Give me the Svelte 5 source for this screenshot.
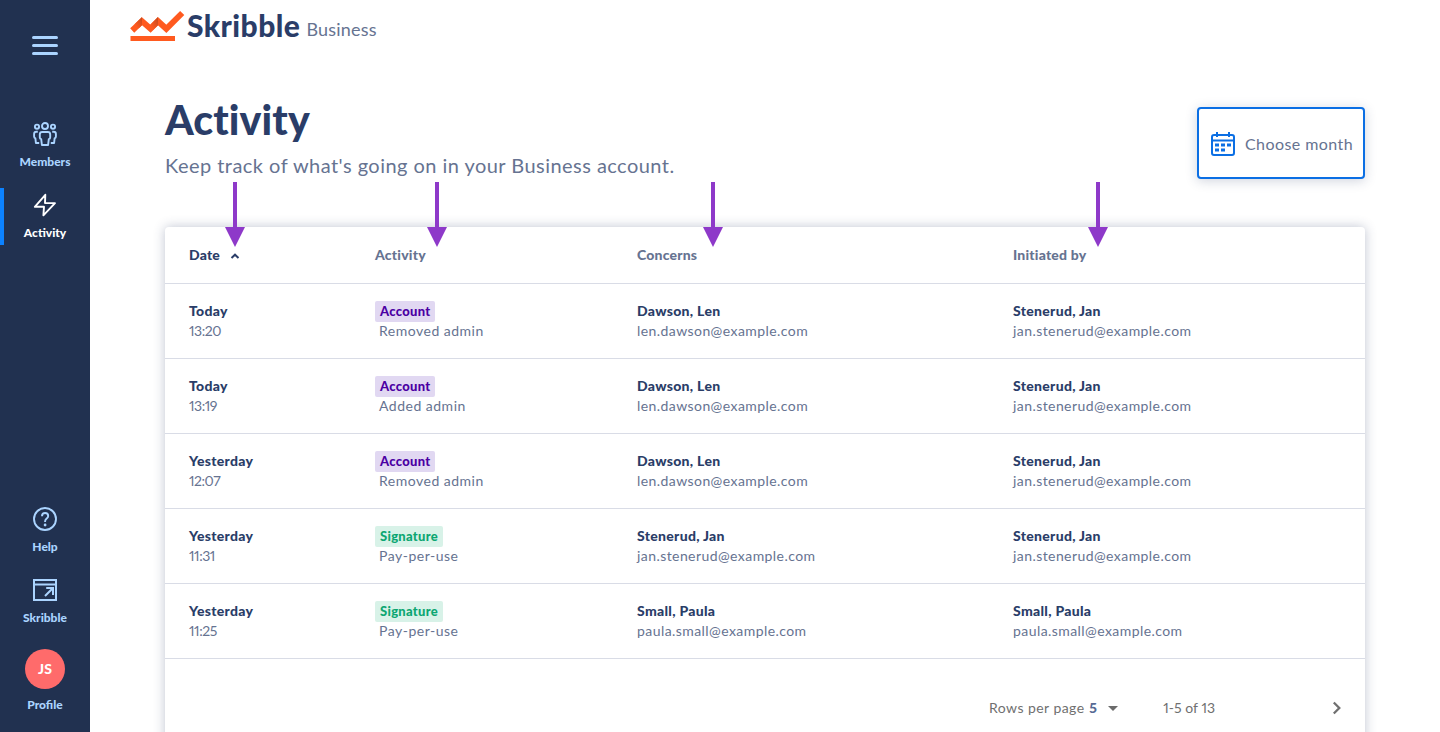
<script>
  const rows = [
    { day: 'Today', time: '13:20', type: 'Account', action: 'Removed admin', who: 'Dawson, Len', mail: 'len.dawson@example.com', by: 'Stenerud, Jan', byMail: 'jan.stenerud@example.com' },
    { day: 'Today', time: '13:19', type: 'Account', action: 'Added admin', who: 'Dawson, Len', mail: 'len.dawson@example.com', by: 'Stenerud, Jan', byMail: 'jan.stenerud@example.com' },
    { day: 'Yesterday', time: '12:07', type: 'Account', action: 'Removed admin', who: 'Dawson, Len', mail: 'len.dawson@example.com', by: 'Stenerud, Jan', byMail: 'jan.stenerud@example.com' },
    { day: 'Yesterday', time: '11:31', type: 'Signature', action: 'Pay-per-use', who: 'Stenerud, Jan', mail: 'jan.stenerud@example.com', by: 'Stenerud, Jan', byMail: 'jan.stenerud@example.com' },
    { day: 'Yesterday', time: '11:25', type: 'Signature', action: 'Pay-per-use', who: 'Small, Paula', mail: 'paula.small@example.com', by: 'Small, Paula', byMail: 'paula.small@example.com' }
  ];
  const pointers = [235, 437, 713, 1098];
</script>

<div class="app">
  <nav class="sidebar">
    <button class="menu" aria-label="Menu"><i></i><i></i><i></i></button>

    <a class="item members" href="#members">
      <svg width="26" height="26" viewBox="0 0 26 26" fill="none" stroke="currentColor" stroke-width="1.9" stroke-linejoin="round">
        <circle cx="13" cy="5" r="3" />
        <circle cx="5" cy="5.700" r="2.100" />
        <circle cx="21" cy="5.700" r="2.100" />
        <path d="M10.200 11h5.600c1.500 0 2.400.9 2.400 2.400v3c0 1-.5 1.500-1.400 1.700l-.7 5.900H9.900l-.7-5.900c-.9-.2-1.400-.7-1.400-1.700v-3c0-1.500.9-2.400 2.400-2.400z" />
        <path d="M5.800 10.700H4.400C2.900 10.700 2.100 11.500 2.100 13v2.600c0 1 .5 1.500 1.300 1.800l.5 4.600h3.300" />
        <path d="M20.200 10.700h1.400c1.500 0 2.300.8 2.300 2.300v2.600c0 1-.5 1.500-1.300 1.800l-.5 4.600h-3.300" />
      </svg>
      <span>Members</span>
    </a>
    <a class="item active" href="#activity">
      <svg width="26" height="26" viewBox="0 0 26 26" fill="none" stroke="currentColor" stroke-width="1.9" stroke-linejoin="round">
        <path d="M13.300 2.800L2.800 14.800h9.200L11.400 23.400 23 11.100h-10z" />
      </svg>
      <span>Activity</span>
    </a>

    <a class="item help" href="#help">
      <svg width="26" height="26" viewBox="0 0 26 26" fill="none" stroke="currentColor" stroke-width="1.900">
        <circle cx="13" cy="13" r="11" />
        <path d="M10 10.200c0-2 1.200-3.200 3.100-3.200s3.100 1.200 3.100 2.900c0 2.700-3.100 2.600-3.100 5.300v.9" />
        <circle cx="13.100" cy="19" r="1.400" fill="currentColor" stroke="none" />
      </svg>
      <span>Help</span>
    </a>
    <a class="item skribble" href="#skribble">
      <svg width="26" height="26" viewBox="0 0 26 26" fill="none" stroke="currentColor" stroke-width="2">
        <path d="M2 3h22v20H2zM2 7.500h22" />
        <path d="M13 19l7.500-7.500M14.200 11h6.800v7" />
      </svg>
      <span>Skribble</span>
    </a>
    <a class="item profile" href="#profile">
      <b class="avatar">JS</b>
      <span>Profile</span>
    </a>
  </nav>

  <main>
    <header class="brand">
      <svg width="55" height="32" viewBox="0 0 55 32">
        <defs>
          <linearGradient id="fold" x1="0" y1="1" x2="1" y2="0">
            <stop offset=".2" stop-color="#ff5a1f" />
            <stop offset="1" stop-color="#c4481c" />
          </linearGradient>
        </defs>
        <path d="M2.200 20.500L12 11.200l8.500 7.500L28 11.200l8.300 7.600L52.200 3" fill="none" stroke="#ff5a1f" stroke-width="5.900" />
        <path d="M4.500 14.200L12 7.100v8.200l-3.400 3.200z" fill="url(#fold)" />
        <path d="M20.500 14.600L28 7.100v8.200l-5.500 5.300z" fill="url(#fold)" />
        <path d="M.5 26h44.500v5H.5z" fill="#ff5a1f" />
      </svg>
      <strong>Skribble</strong>
      <span>Business</span>
    </header>

    <section class="page">
      <div class="heading">
        <div>
          <h1>Activity</h1>
          <p>Keep track of what's going on in your Business account.</p>
        </div>
        <button class="month">
          <svg width="26" height="26" viewBox="0 0 26 26" fill="none" stroke="#0b6fe4" stroke-width="2">
            <rect x="2" y="4" width="22" height="20" rx="2" />
            <path d="M2 9.500h22" />
            <path d="M7 1v5M19 1v5" />
            <path d="M5 14h4M11 14h4M17 14h4M5 19h4M11 19h4" stroke-width="3" />
          </svg>
          <span>Choose month</span>
        </button>
      </div>

      <div class="card">
        <div class="row head">
          <div class="sorted">Date
            <svg width="10" height="6" viewBox="0 0 10 6" fill="none" stroke="currentColor" stroke-width="2"><path d="M1.500 5L5 1.700 8.500 5" /></svg>
          </div>
          <div>Activity</div>
          <div>Concerns</div>
          <div>Initiated by</div>
        </div>
        {#each rows as r}
          <div class="row">
            <div><strong>{r.day}</strong><span class="time">{r.time}</span></div>
            <div class="kind">
              <em class:green={r.type === 'Signature'}>{r.type}</em>
              <span>{r.action}</span>
            </div>
            <div><strong>{r.who}</strong><span>{r.mail}</span></div>
            <div><strong>{r.by}</strong><span>{r.byMail}</span></div>
          </div>
        {/each}
        <footer>
          <span class="per">Rows per page</span>
          <b>5</b>
          <svg class="caret" width="10" height="5" viewBox="0 0 10 5"><path d="M0 0h10L5 5z" fill="#6b6b6b" /></svg>
          <span class="range">1-5 of 13</span>
          <svg class="next" width="10" height="14" viewBox="0 0 10 14" fill="none" stroke="#707070" stroke-width="2.300"><path d="M1.800 1.500L7.300 7l-5.500 5.500" /></svg>
        </footer>
      </div>
    </section>
  </main>

  {#each pointers as x}
    <svg class="pointer" style="left: {x - 10}px" width="20" height="65" viewBox="0 0 20 65">
      <path d="M8 0h4v45h8L10 65 0 45h8z" fill="#8e39c9" />
    </svg>
  {/each}
</div>

<style>
  :global(body) { background: #fff; overflow: hidden; }
  .app {
    position: relative;
    display: flex;
    height: 732px;
    overflow: hidden;
    font-family: Lato, "Open Sans", sans-serif;
    color: #667391;
    font-size: 14px;
  }
  button { font: inherit; color: inherit; cursor: pointer; }
  .sidebar {
    box-sizing: border-box;
    width: 90px;
    flex: none;
    background: #213150;
    display: flex;
    flex-direction: column;
    align-items: center;
    padding-top: 36px;
  }
  .menu {
    display: flex;
    flex-direction: column;
    gap: 5px;
    padding: 0;
    border: 0;
    background: none;
  }
  .menu i { width: 26px; height: 3px; border-radius: 2px; background: #abd4ff; }
  .item {
    box-sizing: border-box;
    width: 90px;
    height: 57px;
    padding-top: 4px;
    display: flex;
    flex-direction: column;
    align-items: center;
    color: #abd4ff;
    text-decoration: none;
    font-size: 12px;
    font-weight: 900;
    line-height: 16px;
  }
  .item svg { flex: none; }
  .item span { margin-top: 7px; }
  .members { margin-top: 62px; }
  .active { margin-top: 14px; color: #fff; background: linear-gradient(#0c82ff, #0c82ff) left / 4px 100% no-repeat; }
  .help { margin-top: auto; }
  .skribble { margin-top: 14px; }
  .profile { height: 83px; padding: 0; margin-top: 19px; }
  .profile span { margin-top: 8px; }
  .avatar {
    width: 40px;
    height: 40px;
    border-radius: 50%;
    background: #ff6b6b;
    color: #fff;
    font-size: 14px;
    line-height: 40px;
    text-align: center;
  }
  main { flex: 1; }
  .brand { display: flex; align-items: baseline; height: 60px; padding: 10px 0 0 40px; box-sizing: border-box; }
  .brand svg { align-self: flex-start; }
  .brand strong { margin-left: 2px; font-size: 30px; line-height: 31px; font-weight: 900; color: #2a3d68; letter-spacing: .45px; }
  .brand span { margin-left: 6px; font-size: 18px; letter-spacing: .2px; position: relative; top: -1px; }
  .page { padding: 39px 75px 0; }
  .heading { display: flex; justify-content: space-between; height: 128px; }
  h1 { margin: 0; font-size: 41px; line-height: 42px; font-weight: 900; color: #2a3d68; letter-spacing: .1px; }
  .heading p { margin: 12px 0 0; font-size: 20px; line-height: 24px; letter-spacing: .46px; }
  .month {
    box-sizing: border-box;
    width: 168px;
    height: 72px;
    margin-top: 8px;
    padding: 2px 0 0 11px;
    display: flex;
    align-items: center;
    gap: 9px;
    border: 2px solid #0b6fe4;
    border-radius: 4px;
    background: #fff;
    box-shadow: 0 2px 12px rgba(42, 61, 104, .22);
    font-size: 16px;
    white-space: nowrap;
    letter-spacing: .43px;
  }
  .month svg { flex: none; }
  .month span { margin-top: -2px; }
  .card {
    height: 560px;
    border-radius: 4px;
    background: #fff;
    box-shadow: 0 0 12px rgba(42, 61, 104, .3);
  }
  .row {
    box-sizing: border-box;
    display: grid;
    grid-template-columns: 186px 262px 376px 1fr;
    height: 75px;
    padding: 17px 24px;
    border-bottom: 1px solid #d9dce6;
    line-height: 20px;
    letter-spacing: .43px;
  }
  .head { height: 57px; padding-top: 18px; font-weight: 900; letter-spacing: .2px; }
  .sorted, .row strong { color: #2a3d68; }
  .sorted svg { margin: 0 0 1px 6px; }
  .row strong { display: block; font-weight: 900; letter-spacing: .3px; }
  .row span { display: block; }
  .row .time { font-variant-numeric: proportional-nums; letter-spacing: -.45px; }
  .kind em {
    display: block;
    width: max-content;
    height: 21px;
    margin-bottom: -1px;
    padding: 0 5px;
    box-sizing: border-box;
    border-radius: 2px;
    background: #e1d8f2;
    color: #4b00a3;
    font-style: normal;
    font-weight: 900;
    font-size: 13px;
    line-height: 21px;
    letter-spacing: .3px;
  }
  .kind em.green { background: #d8f2e8; color: #0ca672; }
  .kind span { margin-left: 4px; letter-spacing: .5px; }
  footer { display: flex; align-items: center; height: 98px; padding-left: 824px; color: #707070; }
  .per { width: 95px; letter-spacing: .45px; white-space: nowrap; }
  footer span, footer b { margin-top: -1px; }
  footer b { margin-left: 5px; color: #566a94; font-weight: 900; }
  .caret { margin-left: 11px; }
  .range { width: 169px; margin-left: 45px; font-variant-numeric: proportional-nums; letter-spacing: .05px; }
  .pointer { position: absolute; top: 182px; }
</style>
